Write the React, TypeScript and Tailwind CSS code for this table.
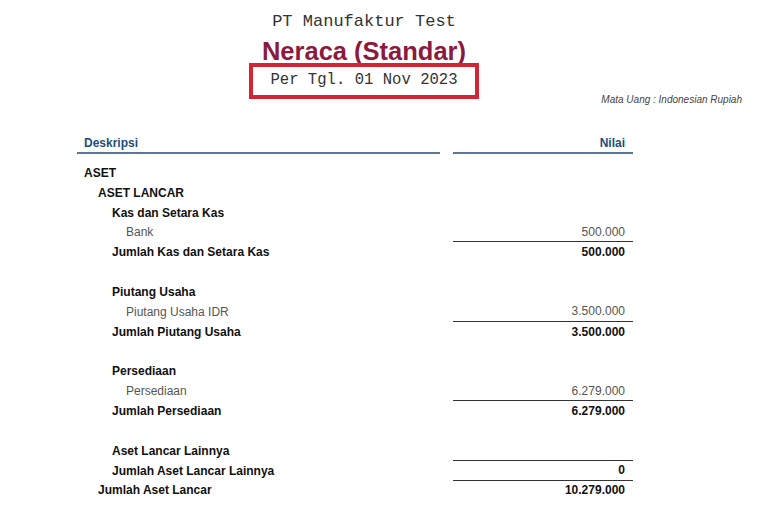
import React from 'react'

interface Row {
  label?: string
  value?: string
  indent: number
  kind: 'head' | 'item' | 'total' | 'blank'
  line?: boolean
}

const rows: Row[] = [
  { label: 'ASET', indent: 0, kind: 'head' },
  { label: 'ASET LANCAR', indent: 1, kind: 'head' },
  { label: 'Kas dan Setara Kas', indent: 2, kind: 'head' },
  { label: 'Bank', value: '500.000', indent: 3, kind: 'item', line: true },
  { label: 'Jumlah Kas dan Setara Kas', value: '500.000', indent: 2, kind: 'total' },
  { indent: 0, kind: 'blank' },
  { label: 'Piutang Usaha', indent: 2, kind: 'head' },
  { label: 'Piutang Usaha IDR', value: '3.500.000', indent: 3, kind: 'item', line: true },
  { label: 'Jumlah Piutang Usaha', value: '3.500.000', indent: 2, kind: 'total' },
  { indent: 0, kind: 'blank' },
  { label: 'Persediaan', indent: 2, kind: 'head' },
  { label: 'Persediaan', value: '6.279.000', indent: 3, kind: 'item', line: true },
  { label: 'Jumlah Persediaan', value: '6.279.000', indent: 2, kind: 'total' },
  { indent: 0, kind: 'blank' },
  { label: 'Aset Lancar Lainnya', indent: 2, kind: 'head', line: true },
  { label: 'Jumlah Aset Lancar Lainnya', value: '0', indent: 2, kind: 'total', line: true },
  { label: 'Jumlah Aset Lancar', value: '10.279.000', indent: 1, kind: 'total' },
]

const indentClass = ['pl-[7px]', 'pl-[21px]', 'pl-[35px]', 'pl-[49px]']

const ReportRow = ({ row }: { row: Row }) => {
  const isItem = row.kind === 'item'
  return (
    <div className="flex h-[19.85px] items-center">
      <div
        className={`w-[363px] ${indentClass[row.indent]} ${
          isItem ? 'font-normal text-[#555]' : 'font-bold text-[#111]'
        }`}
      >
        {row.label}
      </div>
      <div
        className={`ml-[13px] w-[180px] h-full flex items-center justify-end pr-[8px] ${
          row.line ? 'border-b border-[#333]' : ''
        } ${isItem ? 'font-normal text-[#555]' : 'font-bold text-[#111]'}`}
      >
        {row.value}
      </div>
    </div>
  )
}

const App = () => {
  return (
    <div className="w-[768px] h-[509px] bg-white overflow-hidden font-['Liberation_Sans',Arial,sans-serif]">
      <div className="w-[728px] flex flex-col items-center pt-[11px]">
        <div className="font-['Liberation_Mono','Courier_New',monospace] text-[17px] leading-[22px] text-[#333]">
          PT Manufaktur Test
        </div>
        <div className="mt-[3px] h-[30px] text-[25.5px] leading-[30px] font-bold text-[#8b1a3e]">
          Neraca (Standar)
        </div>
        <div className="-mt-[3px] w-[230px] h-[36px] border-4 border-[#d32534] flex items-center justify-center font-['Liberation_Mono','Courier_New',monospace] text-[15.6px] text-[#333]">
          Per Tgl. 01 Nov 2023
        </div>
      </div>
      <div className="pr-[26px] text-right italic text-[10px] leading-[12px] text-[#444] -mt-[5px]">
        Mata Uang : Indonesian Rupiah
      </div>
      <div className="pl-[77px] mt-[29px] text-[12px]">
        <div className="flex h-[19px] items-end">
          <div className="w-[363px] border-b-2 border-[#58799a] pl-[7px] pb-[2px] leading-[14px] font-bold text-[#1f4e79]">
            Deskripsi
          </div>
          <div className="ml-[13px] w-[180px] border-b-2 border-[#58799a] pr-[8px] pb-[2px] leading-[14px] text-right font-bold text-[#1f4e79]">
            Nilai
          </div>
        </div>
        <div className="mt-[9px]">
          {rows.map((row, idx) => (
            <ReportRow key={idx} row={row} />
          ))}
        </div>
      </div>
    </div>
  )
}

export default App
